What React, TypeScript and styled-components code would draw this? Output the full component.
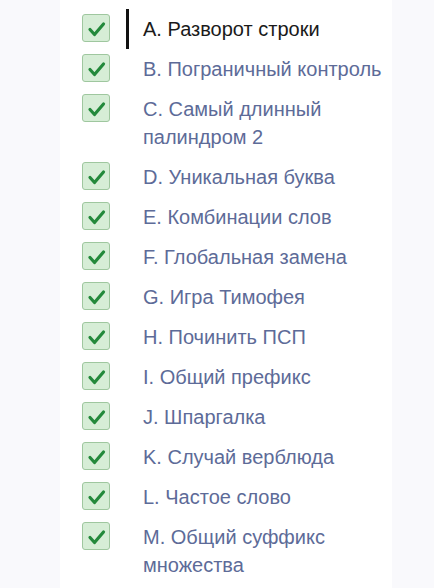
import React from "react";
import styled, { createGlobalStyle } from "styled-components";

const GlobalStyle = createGlobalStyle`
  html, body {
    margin: 0;
    padding: 0;
    background: #f9f9fc;
  }
  body {
    font-family: "Liberation Sans", Arial, sans-serif;
  }
`;

const Page = styled.div`
  display: flex;
  min-height: 588px;
`;

const Panel = styled.nav`
  margin-left: 60px;
  width: 332px;
  background: #ffffff;
  padding: 9px 6px 0 0;
  box-sizing: border-box;
`;

const List = styled.ul`
  list-style: none;
  margin: 0;
  padding: 0;
  display: flex;
  flex-direction: column;
`;

const Row = styled.li`
  display: flex;
  align-items: flex-start;
  padding-left: 22px;
`;

const Box = styled.span`
  flex: none;
  width: 26px;
  height: 26px;
  margin-top: 5px;
  margin-right: 16px;
  border: 1px solid #9fc79f;
  border-radius: 3px;
  background: #d6edd6;
  display: flex;
  align-items: center;
  justify-content: center;
`;

const Label = styled.a<{ $active?: boolean }>`
  display: block;
  flex: 1;
  border-left: 3px solid ${(p) => (p.$active ? "#111111" : "transparent")};
  padding: 6px 0 6px 14px;
  font-family: "Liberation Sans", Arial, sans-serif;
  font-size: 20px;
  line-height: 28px;
  color: ${(p) => (p.$active ? "#1a1a1a" : "#5d6b98")};
  text-decoration: none;
`;

const Check = () => (
  <svg width="28" height="28" viewBox="0 0 28 28" style={{ margin: -1 }}>
    <path
      d="M8 15.5 L12.5 20.5 L21.5 10"
      fill="none"
      stroke="#23893b"
      strokeWidth="3.2"
      strokeLinecap="round"
      strokeLinejoin="round"
    />
  </svg>
);

const items = [
  "A. Разворот строки",
  "B. Пограничный контроль",
  "C. Самый длинный палиндром 2",
  "D. Уникальная буква",
  "E. Комбинации слов",
  "F. Глобальная замена",
  "G. Игра Тимофея",
  "H. Починить ПСП",
  "I. Общий префикс",
  "J. Шпаргалка",
  "K. Случай верблюда",
  "L. Частое слово",
  "M. Общий суффикс множества",
];

export default function App() {
  return (
    <>
      <GlobalStyle />
      <Page>
        <Panel>
          <List>
            {items.map((t, i) => (
              <Row key={t}>
                <Box>
                  <Check />
                </Box>
                <Label $active={i === 0} href="#">
                  {t}
                </Label>
              </Row>
            ))}
          </List>
        </Panel>
      </Page>
    </>
  );
}
